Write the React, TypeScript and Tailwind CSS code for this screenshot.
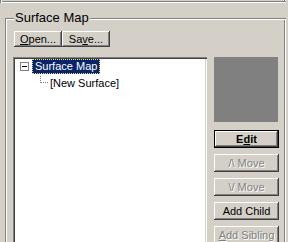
const raised =
  'shadow-[inset_-1px_-1px_#404040,inset_1px_1px_#ffffff,inset_-2px_-2px_#808080,inset_2px_2px_#d4d0c8]'
const raisedDefault =
  'shadow-[inset_0_0_0_1px_#000000,inset_-2px_-2px_#404040,inset_2px_2px_#ffffff,inset_-3px_-3px_#808080]'
const font = "font-['Liberation_Sans',Arial,sans-serif]"

function Button({
  children,
  className = '',
  disabled = false,
  isDefault = false,
}: {
  children: React.ReactNode
  className?: string
  disabled?: boolean
  isDefault?: boolean
}) {
  return (
    <div
      className={`flex items-center justify-center bg-[#d4d0c8] text-[11px] leading-none ${
        isDefault ? raisedDefault : raised
      } ${disabled ? 'text-[#808080] [text-shadow:1px_1px_0_#ffffff]' : 'text-black'} ${className}`}
    >
      {children}
    </div>
  )
}

export default function App() {
  return (
    <div className={`relative h-[242px] w-[288px] overflow-hidden bg-[#d4d0c8] ${font}`}>
      {/* bottom edge of the group above */}
      <div className="h-[3px] w-[286px] shadow-[inset_1px_0_#808080,inset_2px_0_#ffffff,inset_0_-1px_#ffffff,inset_0_-2px_#808080,inset_-1px_0_#ffffff,inset_-2px_0_#808080]" />

      <div className="relative ml-[5px] mt-[15px] h-[260px] w-[281px] pl-[8px] pt-[13px] shadow-[inset_1px_1px_#808080,inset_2px_2px_#ffffff,inset_-1px_0_#ffffff,inset_-2px_0_#808080]">
        <span className="absolute left-[9px] top-[-8px] bg-[#d4d0c8] px-[1px] text-[13px] leading-[16px] text-black">
          Surface Map
        </span>

        <div className="ml-[1px] flex">
          <Button className="h-[16px] w-[48px]">
            <span>
              <span className="underline">O</span>pen...
            </span>
          </Button>
          <Button className="h-[16px] w-[48px]">
            <span>
              Sa<span className="underline">v</span>e...
            </span>
          </Button>
        </div>

        <div className="mt-[10px] flex">
          <div className="relative h-[200px] w-[194px] bg-white shadow-[inset_1px_1px_#808080,inset_2px_2px_#404040,inset_-1px_-1px_#ffffff,inset_-2px_-2px_#d4d0c8]">
            <div className="absolute left-[7px] top-[5px] flex h-[9px] w-[9px] items-center justify-center border border-[#808080] bg-white">
              <div className="h-px w-[5px] bg-black" />
            </div>
            <div className="absolute left-[19px] top-[2px] flex h-[15px] items-center border border-dotted border-[#f0e070] bg-[#0a246a] px-[2px] text-[11px] leading-none text-white">
              Surface Map
            </div>
            <div className="absolute left-[27px] top-[19px] h-[7px] w-[8px] border-b border-l border-dotted border-[#808080]" />
            <div className="absolute left-[37px] top-[19px] flex h-[15px] items-center text-[11px] leading-none text-black">
              [New Surface]
            </div>
          </div>

          <div className="ml-[7px] flex flex-col">
            <div className="h-[65px] w-[64px] bg-[#808080]" />
            <div className="mt-[8px] flex flex-col gap-[6px]">
              <Button isDefault className="h-[18px] w-[65px] font-bold">
                <span>
                  E<span className="underline">d</span>it
                </span>
              </Button>
              <Button disabled className="h-[18px] w-[65px]">
                /\ Move
              </Button>
              <Button disabled className="h-[18px] w-[65px]">
                \/ Move
              </Button>
              <Button className="h-[18px] w-[65px]">Add Child</Button>
              <Button disabled className="h-[18px] w-[65px]">
                <span>
                  <span className="underline">A</span>dd Sibling
                </span>
              </Button>
            </div>
          </div>
        </div>
      </div>
    </div>
  )
}
